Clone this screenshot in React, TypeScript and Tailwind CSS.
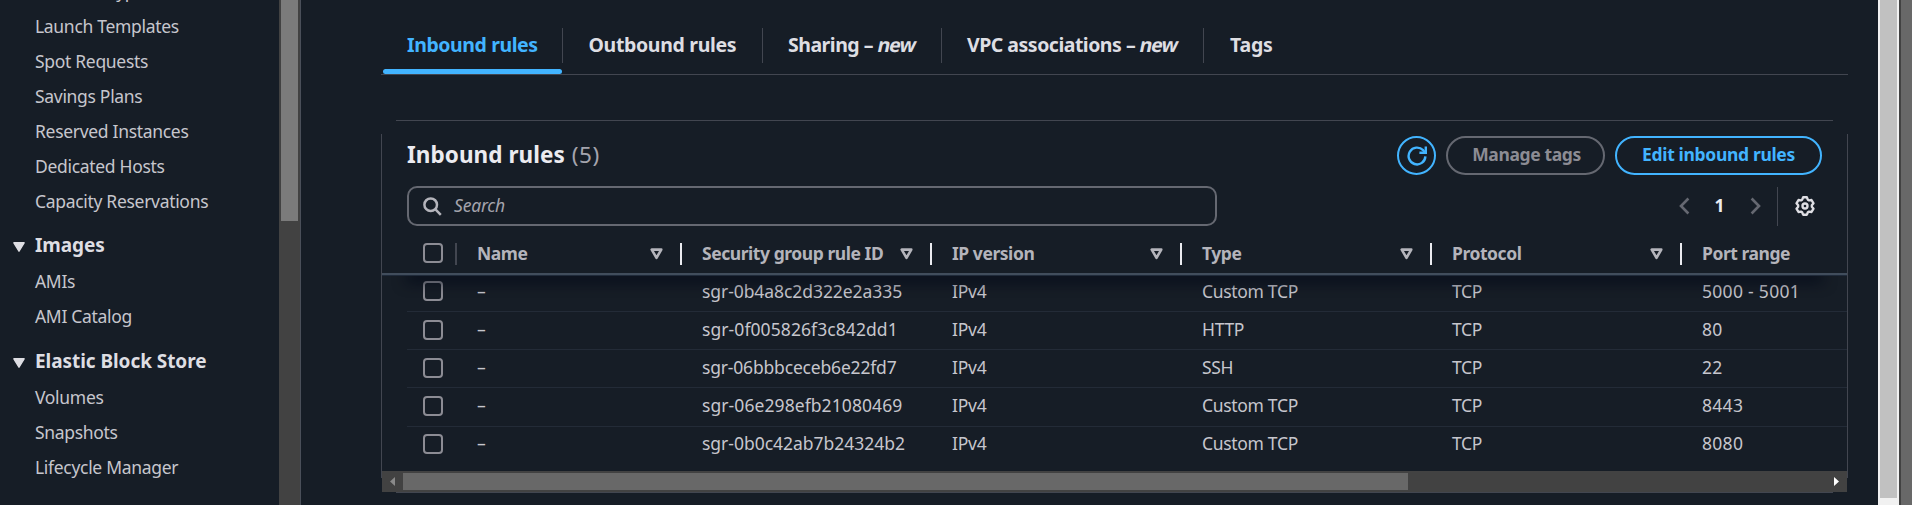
import type { ReactNode } from "react";

type NavSection = { title?: string; headHeight?: string; items: string[] };

const NAV: NavSection[] = [
  {
    items: [
      "Instance Types",
      "Launch Templates",
      "Spot Requests",
      "Savings Plans",
      "Reserved Instances",
      "Dedicated Hosts",
      "Capacity Reservations",
    ],
  },
  { title: "Images", headHeight: "h-[45px]", items: ["AMIs", "AMI Catalog"] },
  { title: "Elastic Block Store", headHeight: "h-[46px]", items: ["Volumes", "Snapshots", "Lifecycle Manager"] },
];

const ROWS = [
  { id: "sgr-0b4a8c2d322e2a335", type: "Custom TCP", port: "5000 - 5001", height: "h-9 pb-[5px]", box: "", track: "tracking-[-0.07px]" },
  { id: "sgr-0f005826f3c842dd1", type: "HTTP", port: "80", height: "h-[38px] pb-[3px]", box: "pt-[2px]", track: "tracking-[0.08px]" },
  { id: "sgr-06bbbceceb6e22fd7", type: "SSH", port: "22", height: "h-[38px] pb-[3px]", box: "pt-[2px]", track: "tracking-[-0.18px]" },
  { id: "sgr-06e298efb21080469", type: "Custom TCP", port: "8443", height: "h-[39px] pb-[3px]", box: "pt-px", track: "tracking-[0.08px]" },
  { id: "sgr-0b0c42ab7b24324b2", type: "Custom TCP", port: "8080", height: "h-[37px] pb-1", box: "pt-px", track: "tracking-[-0.02px]" },
];

const COLUMNS = [
  { label: "Name", width: "w-[225px]", sortable: true },
  { label: "Security group rule ID", width: "w-[250px]", sortable: true },
  { label: "IP version", width: "w-[250px]", sortable: true },
  { label: "Type", width: "w-[250px]", sortable: true },
  { label: "Protocol", width: "w-[250px]", sortable: true },
  { label: "Port range", width: "w-[165px]", sortable: false },
];

function Sidebar() {
  return (
    <aside className="flex w-[301px] shrink-0 overflow-hidden">
      <nav className="-mt-[26px] w-[279px] text-[17.5px] tracking-[-0.31px] text-[#c6c6cd]">
        {NAV.map((section, i) => (
          <div key={i}>
            {section.title && (
              <div
                className={`flex items-end pl-[13px] text-[19px] font-bold tracking-[-0.06px] text-[#dedee3] ${section.headHeight}`}
              >
                <span className="flex h-[35px] items-center">
                  <svg width="12" height="10" viewBox="0 0 12 10" className="mr-[10px]">
                    <path d="M.9.8h10.2L6 9.2z" fill="#dedee3" stroke="#dedee3" strokeWidth="1.4" strokeLinejoin="round" />
                  </svg>
                  <span className="pb-[2px]">{section.title}</span>
                </span>
              </div>
            )}
            {section.items.map((item) => (
              <div key={item} className="flex h-[35px] items-center pl-[35px]">
                {item}
              </div>
            ))}
          </div>
        ))}
      </nav>
      <div className="w-[22px] border-r border-[#4a4f59] bg-[#424242] pl-[2px]">
        <div className="h-[221px] w-[17px] bg-[#7b7b7b]" />
      </div>
    </aside>
  );
}

type TabProps = { children: ReactNode; className: string; active?: boolean; last?: boolean };

function Tab({ children, className, active, last }: TabProps) {
  return (
    <div className="flex h-full flex-col justify-between">
      <div
        className={`flex h-[35px] items-center whitespace-pre pb-px text-[19.5px] font-bold ${className} ${
          active ? "text-[#42b4ff]" : "text-[#dedee3]"
        } ${last ? "" : "border-r border-[#424650]"}`}
      >
        {children}
      </div>
      {active && <div className="mr-px h-[5px] rounded-[3px] bg-[#42b4ff]" />}
    </div>
  );
}

function NewMark() {
  return <em className="inline-block -skew-x-12 tracking-[-1.1px] not-italic">new</em>;
}

function Tabs() {
  return (
    <div className="flex h-[75px] border-b border-[#424650] pl-[2px] pt-7">
      <Tab className="w-[180px] pl-6 tracking-[-0.42px]" active>
        Inbound rules
      </Tab>
      <Tab className="w-[200px] pl-[25.5px] tracking-[-0.34px]">Outbound rules</Tab>
      <Tab className="w-[179px] pl-[25px] tracking-[-0.5px]">
        Sharing – <NewMark />
      </Tab>
      <Tab className="w-[262px] pl-[25px] tracking-[-0.5px]">
        VPC associations – <NewMark />
      </Tab>
      <Tab className="w-[100px] pl-[26px] tracking-[-0.2px]" last>
        Tags
      </Tab>
    </div>
  );
}

function RefreshIcon() {
  return (
    <svg width="20" height="20" viewBox="0 0 20 20" fill="none" stroke="currentColor" strokeWidth="2.4">
      <path d="M18.4 10.4a8.4 8.4 0 1 1-2.3-6.2l1.9 2.1" />
      <path d="M18.8.4v6.4h-6.4" />
    </svg>
  );
}

function SearchIcon() {
  return (
    <svg width="19" height="19" viewBox="0 0 19 19" fill="none" stroke="#b4b4bb" strokeWidth="2.5">
      <circle cx="7.7" cy="7.7" r="6.3" />
      <path d="m12.2 12.2 5.6 5.6" />
    </svg>
  );
}

function GearIcon() {
  return (
    <svg
      width="20"
      height="20"
      viewBox="-10 -10 20 20"
      fill="none"
      stroke="#dedee3"
      strokeWidth="2.4"
      strokeLinejoin="round"
    >
      <path d="M-1.9-8.7H1.9L2.8-6.3 4.05-5.58 6.5-6 8.5-2.7 6.86-.72V.72L8.5 2.7 6.5 6 4.05 5.58 2.8 6.3 1.9 8.7H-1.9L-2.8 6.3-4.05 5.58-6.5 6-8.5 2.7-6.86.72V-.72L-8.5-2.7-6.5-6-4.05-5.58-2.8-6.3z" />
      <circle r="2.5" />
    </svg>
  );
}

function Chevron({ flip }: { flip?: boolean }) {
  return (
    <svg
      width="11"
      height="18"
      viewBox="0 0 11 18"
      fill="none"
      stroke="#656871"
      strokeWidth="2.6"
      className={flip ? "rotate-180" : ""}
    >
      <path d="M9.4 1.5 2 9l7.4 7.5" />
    </svg>
  );
}

function Checkbox() {
  return <span className="block size-5 shrink-0 rounded-[4px] border-2 border-[#8c8c94]" />;
}

function SortIcon() {
  return (
    <svg width="13" height="12" viewBox="0 0 13 12" fill="none" stroke="#b4b4bb" strokeWidth="2.6" strokeLinejoin="round">
      <path d="M1.7 1.6h9.600l-4.800 8.200z" />
    </svg>
  );
}

function PanelHeader() {
  return (
    <div className="px-[25px] pt-4">
      <div className="flex h-[39px] items-center justify-between">
        <h2 className="pb-[2px] text-[22.5px] font-bold tracking-[0.06px] text-[#ebebf0]">
          Inbound rules <span className="ml-px font-normal tracking-[0.5px] text-[#a4a4ad]">(5)</span>
        </h2>
        <div className="flex gap-[10px] text-[17.5px] font-bold">
          <span className="flex size-[39px] items-center justify-center rounded-full border-2 border-[#42b4ff] text-[#42b4ff]">
            <RefreshIcon />
          </span>
          <span className="flex h-[39px] w-[159px] items-center justify-center rounded-full border-2 border-[#656871] pb-[2px] pl-[2px] tracking-[-0.38px] text-[#8c8c94]">
            Manage tags
          </span>
          <span className="flex h-[39px] w-[207px] items-center justify-center rounded-full border-2 border-[#42b4ff] pb-[2px] tracking-[-0.33px] text-[#42b4ff]">
            Edit inbound rules
          </span>
        </div>
      </div>
      <div className="mt-[11px] flex h-10 items-center justify-between">
        <div className="flex h-10 w-[810px] items-center rounded-[10px] border-2 border-[#656871] pl-[14px]">
          <SearchIcon />
          <span className="ml-3 pb-px text-[17.5px] italic tracking-[-0.2px] text-[#a4a4ad]">Search</span>
        </div>
        <div className="flex h-10 items-center pr-[7px]">
          <Chevron />
          <span className="w-[60px] pb-px pr-px text-center text-[17.5px] font-bold text-[#ebebf0]">1</span>
          <Chevron flip />
          <span className="ml-4 mr-[17px] h-[39px] w-px bg-[#424650]" />
          <GearIcon />
        </div>
      </div>
    </div>
  );
}

function TableHead() {
  return (
    <div className="-mt-px flex h-[50px] border-b-2 border-[#414d5c] pt-[18px] text-[17.5px] font-bold tracking-[-0.45px] text-[#b4b4bb]">
      <div className="flex h-[22px] w-[75px] border-r-2 border-[#424650] pl-[41px]">
        <Checkbox />
      </div>
      {COLUMNS.map((col) => (
        <div
          key={col.label}
          className={`flex h-[22px] items-center justify-between pl-5 ${col.width} ${
            col.sortable ? "border-r-2 border-[#ebebf0] pr-[17px]" : ""
          }`}
        >
          <span className="whitespace-nowrap pb-px">{col.label}</span>
          {col.sortable && <SortIcon />}
        </div>
      ))}
    </div>
  );
}

function TableBody() {
  return (
    <div className="relative h-[196px] overflow-hidden border-t border-[#1f2a3a] text-[17.5px] text-[#c6c6cd]">
      {ROWS.map((row, i) => (
        <div
          key={row.id}
          className={`ml-[25px] flex items-center ${row.height} ${i < ROWS.length - 1 ? "border-b border-[#232b37]" : ""}`}
        >
          <div className={`w-[50px] pl-4 ${row.box}`}>
            <Checkbox />
          </div>
          <div className="w-[225px] pl-5">–</div>
          <div className={`w-[250px] pl-5 ${row.track}`}>{row.id}</div>
          <div className="w-[250px] pl-5 tracking-[-0.2px]">IPv4</div>
          <div className="w-[250px] pl-5 tracking-[-0.32px]">{row.type}</div>
          <div className="w-[250px] pl-5 tracking-[-0.3px]">TCP</div>
          <div className="pl-5 tracking-[0.3px]">{row.port}</div>
        </div>
      ))}
      <div className="absolute inset-x-0 top-0 h-10 overflow-hidden">
        <div className="mx-[28px] -mt-px h-px shadow-[0_2px_14px_4px_rgba(0,7,22,0.8)]" />
      </div>
    </div>
  );
}

function HorizontalScrollbar() {
  return (
    <div className="flex h-[21px] items-center bg-[#424242]">
      <svg width="21" height="21" viewBox="0 0 21 21">
        <path d="M13 6v9l-5-4.500z" fill="#8a8a8a" />
      </svg>
      <div className="h-[17px] w-[1005px] bg-[#686868]" />
      <svg width="21" height="21" viewBox="0 0 21 21" className="ml-auto">
        <path d="M8 6v9l5-4.500z" fill="#fff" />
      </svg>
    </div>
  );
}

export default function App() {
  return (
    <div className="flex h-[505px] w-[1912px] overflow-hidden bg-[#161d26] font-['Noto_Sans','Open_Sans',sans-serif]">
      <Sidebar />
      <main className="w-[1577px] shrink-0 pl-20 pr-[30px]">
        <Tabs />
        <div className="mx-[15px] mt-[45px] h-px bg-[#424650]" />
        <section className="-mt-px flex">
          <div className="mt-[14px] h-[344px] w-px bg-[#424650]" />
          <div className="w-[1465px]">
            <PanelHeader />
            <TableHead />
            <TableBody />
            <HorizontalScrollbar />
            <div className="mx-[14px] h-px bg-[#424650]" />
          </div>
          <div className="mt-[14px] h-[344px] w-px bg-[#424650]" />
        </section>
      </main>
      <div className="w-[21px] shrink-0 bg-[#f1f1f1] pl-[2px]">
        <div className="h-[498px] w-[17px] bg-[#c1c1c1]" />
      </div>
      <div className="flex-1 border-l-2 border-[#424242] bg-[#686868]" />
    </div>
  );
}
